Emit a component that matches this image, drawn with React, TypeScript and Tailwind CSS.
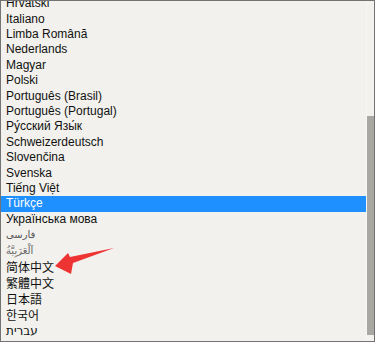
import React from "react";

const latin = [
  "Hrvatski",
  "Italiano",
  "Limba Română",
  "Nederlands",
  "Magyar",
  "Polski",
  "Português (Brasil)",
  "Português (Portugal)",
  "Ру́сский Язы́к",
  "Schweizerdeutsch",
  "Slovenčina",
  "Svenska",
  "Tiếng Việt",
];

export default function App() {
  return (
    <div
      className="relative w-[375px] h-[342px] bg-[#f2f1ed] border border-[#737373] overflow-hidden flex"
      style={{ fontFamily: '"Liberation Sans", Arial, "Noto Sans CJK SC", sans-serif' }}
    >
      <div className="flex-1 overflow-hidden">
        <div className="mt-[-4.7px] flex flex-col text-[12px] text-[#111]">
          {latin.map((t) => (
            <div key={t} className="h-[15.4px] leading-[15.4px] pl-[5px] whitespace-nowrap">
              {t}
            </div>
          ))}
          <div className="h-[15.4px] leading-[15.4px] pl-[5px] bg-[#1e90ff] text-white">Türkçe</div>
          <div className="h-[15.4px] leading-[15.4px] pl-[5px]">Українська мова</div>
          <div className="h-[16px] leading-[16px] pl-[5px] text-[10px] text-[#555] text-left" style={{ fontFamily: '"DejaVu Sans", sans-serif' }}>
            فارسی
          </div>
          <div className="h-[16px] leading-[16px] pl-[5px] text-[10px] text-[#666] text-left" style={{ fontFamily: '"DejaVu Sans", sans-serif' }}>
            اَلْعَرَبِيَّةُ
          </div>
          <div className="h-[16px] leading-[16px] pl-[5px]" style={{ fontFamily: '"Noto Sans CJK SC", sans-serif' }}>简体中文</div>
          <div className="h-[16px] leading-[16px] pl-[5px]" style={{ fontFamily: '"Noto Sans CJK TC", sans-serif' }}>繁體中文</div>
          <div className="h-[16px] leading-[16px] pl-[5px]" style={{ fontFamily: '"Noto Sans CJK JP", sans-serif' }}>日本語</div>
          <div className="h-[16px] leading-[16px] pl-[5px]" style={{ fontFamily: '"Noto Sans CJK KR", sans-serif' }}>한국어</div>
          <div className="h-[16px] leading-[16px] pl-[5px] text-left" style={{ fontFamily: '"DejaVu Sans", sans-serif' }}>
            עברית
          </div>
        </div>
      </div>
      <div className="w-[8px] flex flex-col border-l border-[#f7f6f3]">
        <div className="h-[115px]" />
        <div className="h-[219px] bg-[#a9a7a2]" />
        <div className="flex-1" />
      </div>
      <svg className="absolute left-0 top-0 pointer-events-none" width="375" height="342">
        <polygon
          points="54,265 67,252 69,256 113,247 72,262 70,273"
          fill="#ee3333"
        />
      </svg>
    </div>
  );
}
